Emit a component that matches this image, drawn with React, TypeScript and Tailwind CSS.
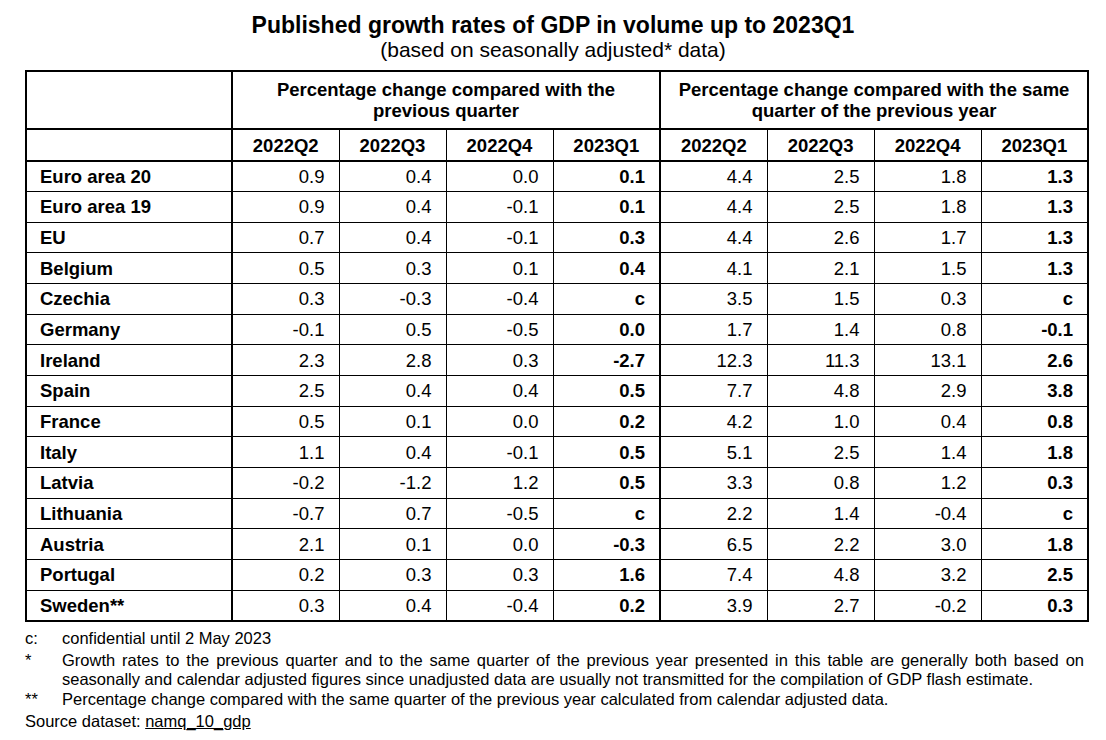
const quarters = ["2022Q2", "2022Q3", "2022Q4", "2023Q1"];

const rows: [string, string[], string[]][] = [
  ["Euro area 20", ["0.9", "0.4", "0.0", "0.1"], ["4.4", "2.5", "1.8", "1.3"]],
  ["Euro area 19", ["0.9", "0.4", "-0.1", "0.1"], ["4.4", "2.5", "1.8", "1.3"]],
  ["EU", ["0.7", "0.4", "-0.1", "0.3"], ["4.4", "2.6", "1.7", "1.3"]],
  ["Belgium", ["0.5", "0.3", "0.1", "0.4"], ["4.1", "2.1", "1.5", "1.3"]],
  ["Czechia", ["0.3", "-0.3", "-0.4", "c"], ["3.5", "1.5", "0.3", "c"]],
  ["Germany", ["-0.1", "0.5", "-0.5", "0.0"], ["1.7", "1.4", "0.8", "-0.1"]],
  ["Ireland", ["2.3", "2.8", "0.3", "-2.7"], ["12.3", "11.3", "13.1", "2.6"]],
  ["Spain", ["2.5", "0.4", "0.4", "0.5"], ["7.7", "4.8", "2.9", "3.8"]],
  ["France", ["0.5", "0.1", "0.0", "0.2"], ["4.2", "1.0", "0.4", "0.8"]],
  ["Italy", ["1.1", "0.4", "-0.1", "0.5"], ["5.1", "2.5", "1.4", "1.8"]],
  ["Latvia", ["-0.2", "-1.2", "1.2", "0.5"], ["3.3", "0.8", "1.2", "0.3"]],
  ["Lithuania", ["-0.7", "0.7", "-0.5", "c"], ["2.2", "1.4", "-0.4", "c"]],
  ["Austria", ["2.1", "0.1", "0.0", "-0.3"], ["6.5", "2.2", "3.0", "1.8"]],
  ["Portugal", ["0.2", "0.3", "0.3", "1.6"], ["7.4", "4.8", "3.2", "2.5"]],
  ["Sweden**", ["0.3", "0.4", "-0.4", "0.2"], ["3.9", "2.7", "-0.2", "0.3"]],
];

function ValueCells({ values }: { values: string[] }) {
  return (
    <>
      {values.map((v, i) => (
        <td
          key={i}
          className={`h-[30.67px] border-b border-black pr-[14px] text-right ${
            i === 0 ? "border-l-2" : "border-l"
          } ${i === 3 ? "font-bold" : ""}`}
        >
          {v}
        </td>
      ))}
    </>
  );
}

export default function App() {
  return (
    <div className="w-[1106px] h-[740px] bg-white text-black font-['Liberation_Sans',Arial,sans-serif] overflow-hidden">
      {/* Title */}
      <div className="pt-[12px] text-center">
        <h1 className="text-[23px] leading-[26px] font-bold">
          Published growth rates of GDP in volume up to 2023Q1
        </h1>
        <p className="text-[21px] leading-[24px]">(based on seasonally adjusted* data)</p>
      </div>

      {/* Table */}
      <table className="ml-[25px] mt-[8px] w-[1062px] table-fixed border-collapse border-2 border-black text-[18.5px] leading-[21px]">
        <colgroup>
          <col className="w-[206px]" />
          {Array.from({ length: 8 }).map((_, i) => (
            <col key={i} className="w-[107px]" />
          ))}
        </colgroup>
        <thead>
          <tr>
            <th className="h-[58px] border-b-2 border-black" />
            <th colSpan={4} className="border-b-2 border-l-2 border-black px-2 font-bold">
              Percentage change compared with the
              <br />
              previous quarter
            </th>
            <th colSpan={4} className="border-b-2 border-l-2 border-black px-2 font-bold">
              Percentage change compared with the same
              <br />
              quarter of the previous year
            </th>
          </tr>
          <tr>
            <th className="h-[32px] border-b-2 border-black" />
            {[...quarters, ...quarters].map((q, i) => (
              <th
                key={i}
                className={`border-b-2 border-black font-bold ${i % 4 === 0 ? "border-l-2" : "border-l"}`}
              >
                {q}
              </th>
            ))}
          </tr>
        </thead>
        <tbody>
          {rows.map(([name, qoq, yoy]) => (
            <tr key={name}>
              <td className="h-[30.67px] border-b border-black pl-[13px] font-bold">{name}</td>
              <ValueCells values={qoq} />
              <ValueCells values={yoy} />
            </tr>
          ))}
        </tbody>
      </table>

      {/* Footnotes */}
      <div className="ml-[25px] mt-[7px] w-[1059px] text-[16.5px] leading-[19px]">
        <div className="grid grid-cols-[37px_1fr]">
          <span>c:</span>
          <span>confidential until 2 May 2023</span>
        </div>
        <div className="mt-[3px] grid grid-cols-[37px_1fr]">
          <span>*</span>
          <p className="text-justify">
            Growth rates to the previous quarter and to the same quarter of the previous year presented in this
            table are generally both based on seasonally and calendar adjusted figures since unadjusted data are
            usually not transmitted for the compilation of GDP flash estimate.
          </p>
        </div>
        <div className="mt-[1px] grid grid-cols-[37px_1fr]">
          <span>**</span>
          <span>
            Percentage change compared with the same quarter of the previous year calculated from calendar adjusted
            data.
          </span>
        </div>
        <p className="mt-[3px]">
          Source dataset: <span className="underline">namq_10_gdp</span>
        </p>
      </div>
    </div>
  );
}
